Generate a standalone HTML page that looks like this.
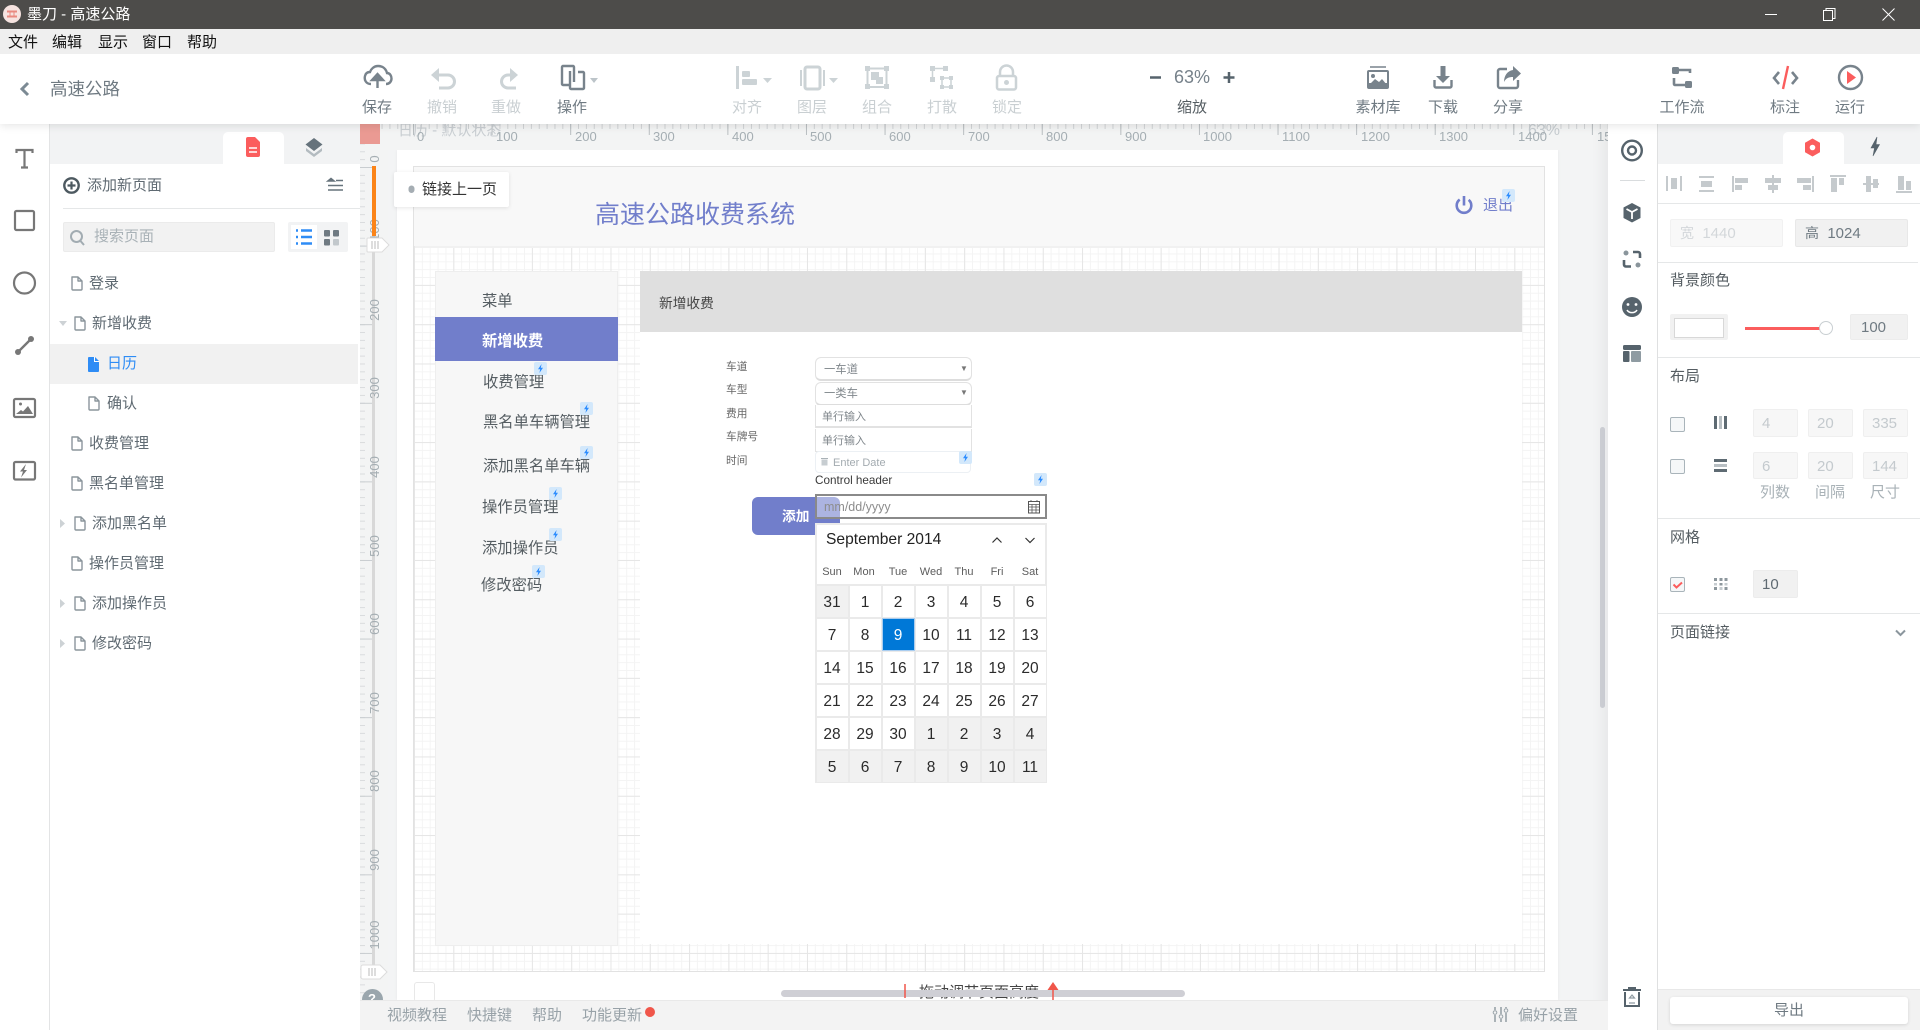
<!DOCTYPE html>
<html lang="zh"><head><meta charset="utf-8"><title>墨刀 - 高速公路</title>
<style>
html,body{margin:0;padding:0;width:1920px;height:1030px;overflow:hidden;background:#f3f4f5}
body{font-family:"Liberation Sans","Noto Sans CJK SC",sans-serif;position:relative;color:#5f6a72}
div,span,i{position:absolute;box-sizing:border-box;display:block}
.t{white-space:nowrap;line-height:20px;transform:translateY(calc(-50% + 1px));font-size:15px}
.c{white-space:nowrap;line-height:20px;transform:translate(-50%,calc(-50% + 1px));font-size:15px;text-align:center}
.tb{color:#6f7a82;top:107px}
.dis{color:#c9cfd2;top:107px}
.hl{background:#e5e7e8;height:1px}
.in{background:#f7f7f7;border:1px solid #efefef;border-radius:2px;color:#c4cace;font-size:15px;line-height:27px;text-align:left;padding-left:8px}
.rl{color:#a5aeb3;font-size:13px;line-height:14px;top:130px;transform:none;white-space:nowrap}
.rv{color:#a5aeb3;font-size:13px;line-height:14px;left:375px;transform:translate(-50%,-50%) rotate(-90deg);white-space:nowrap}
.m{color:#555d62;font-size:15.3px}
.cal{left:815px;top:523px;width:232px;height:260px;background:#eaeaea}
.g{left:1.500px;top:63px;display:grid;grid-template-columns:repeat(7,31px);grid-auto-rows:31px;gap:2px;position:absolute}
.g b{display:block;position:static;background:#fff;color:#2b2b2b;font-weight:400;font-size:15.5px;line-height:33px;height:31px;overflow:hidden;text-align:center}
.g b.o{background:#f1f1f1}
.g b.s{background:#0078d7;color:#fff;outline:1px solid #a9cdf0}
.d{font-size:11px;color:#5c5c5c;top:572px;transform:translate(-50%,-50%);line-height:14px}
.lb{font-size:10.7px;color:#666;left:726px}
.fld{left:815px;width:156px;background:#fff;border:1px solid #e2e2e2}
.ft{font-size:11px;color:#80878c}
.foot{color:#98a2a8;top:1015px}
</style></head><body>

<!-- canvas -->
<div style="left:360px;top:124px;width:1248px;height:876px;background:#f3f4f5"></div>
<div style="left:397px;top:150px;width:1161px;height:850px;background:#fff;box-shadow:0 0 3px rgba(0,0,0,.06)"></div>
<div style="left:413px;top:166px;width:1132px;height:806px;border:1px solid #e2e2e2;background-color:#fff;
background-image:linear-gradient(90deg,#e6e6e6 1px,transparent 1px),linear-gradient(#e6e6e6 1px,transparent 1px),linear-gradient(90deg,#f4f4f4 1px,transparent 1px),linear-gradient(#f4f4f4 1px,transparent 1px);
background-size:39.3px 39.3px,39.3px 39.3px,7.86px 7.86px,7.86px 7.86px"></div>
<div style="left:414px;top:167px;width:1130px;height:79px;background:#f8f8f8"></div>
<div style="left:415px;top:246px;width:1129px;height:2px;background:#f1f1f1"></div>
<div class="t" style="left:595px;top:214px;font-size:25px;line-height:30px;color:#717ecb">高速公路收费系统</div>
<div class="t" style="left:1483px;top:205px;color:#717ecb">退出</div>

<!-- prototype left menu -->
<div style="left:435px;top:271px;width:183px;height:675px;background:#f7f7f7;border:1px solid #eee"></div>
<div style="left:435px;top:317px;width:183px;height:44px;background:#717ecb"></div>
<div class="t m" style="left:482px;top:301px">菜单</div>
<div class="t m" style="left:482px;top:341px;color:#fff;font-weight:700">新增收费</div>
<div class="t m" style="left:483px;top:382px">收费管理</div>
<div class="t m" style="left:483px;top:422px">黑名单车辆管理</div>
<div class="t m" style="left:483px;top:466px">添加黑名单车辆</div>
<div class="t m" style="left:482px;top:507px">操作员管理</div>
<div class="t m" style="left:482px;top:548px">添加操作员</div>
<div class="t m" style="left:481px;top:585px">修改密码</div>

<!-- prototype main -->
<div style="left:640px;top:271px;width:882px;height:673px;background:#fff"></div>
<div style="left:640px;top:271px;width:882px;height:61px;background:#dfdfdf"></div>
<div class="t" style="left:659px;top:303px;font-size:13.7px;color:#444">新增收费</div>
<div class="t lb" style="top:366px">车道</div>
<div class="t lb" style="top:389px">车型</div>
<div class="t lb" style="top:413px">费用</div>
<div class="t lb" style="top:436px">车牌号</div>
<div class="t lb" style="top:460px">时间</div>
<div class="fld" style="top:357px;height:24px;border-radius:6px;border-bottom:2px solid #ddd;width:157px"></div>
<div class="fld" style="top:382px;height:24px;border-radius:6px;border-bottom:2px solid #ddd;width:157px"></div>
<div class="fld" style="top:405px;height:23px;border-width:0 1px 2px 1px;border-color:#e2e2e2;width:157px"></div>
<div class="fld" style="top:429px;height:23px;border-width:0 1px 1px 1px;border-color:#e2e2e2;width:157px"></div>
<div class="fld" style="top:451px;height:22px;border-radius:4px;border-color:#ecf0f4"></div>
<div class="t ft" style="left:824px;top:369px;font-size:11.3px">一车道</div>
<div class="t ft" style="left:824px;top:393px;font-size:11.3px">一类车</div>
<div class="c" style="left:964px;top:368px;font-size:8px;color:#777">▼</div>
<div class="c" style="left:964px;top:392px;font-size:8px;color:#777">▼</div>
<div class="t ft" style="left:822px;top:416px">单行输入</div>
<div class="t ft" style="left:822px;top:440px">单行输入</div>
<div class="t ft" style="left:833px;top:462px;color:#a3abb0">Enter Date</div>
<div class="t" style="left:815px;top:480px;font-size:11.7px;color:#3a3a3a">Control header</div>
<!-- add button -->
<div style="left:752px;top:497px;width:88px;height:38px;background:#717ecb;border-radius:6px"></div>
<div class="t" style="left:782px;top:516px;font-size:13.7px;font-weight:700;color:#fff">添加</div>
<!-- date input -->
<div style="left:815px;top:494px;width:232px;height:25px;border:2px solid #8a8a8a;background:rgba(255,255,255,.42)"></div>
<div style="left:817px;top:496px;width:228px;height:21px;background:linear-gradient(90deg,transparent 23px,#fff 23px);"></div>
<div class="t" style="left:824px;top:506px;font-size:12.5px;color:#8d8d8d">mm/dd/yyyy</div>
<!-- calendar -->
<div class="cal">
<div style="left:2px;top:2px;width:228px;height:59px;background:#fff"></div>
<div class="g">
<b class="o">31</b><b>1</b><b>2</b><b>3</b><b>4</b><b>5</b><b>6</b>
<b>7</b><b>8</b><b class="s">9</b><b>10</b><b>11</b><b>12</b><b>13</b>
<b>14</b><b>15</b><b>16</b><b>17</b><b>18</b><b>19</b><b>20</b>
<b>21</b><b>22</b><b>23</b><b>24</b><b>25</b><b>26</b><b>27</b>
<b>28</b><b>29</b><b>30</b><b class="o">1</b><b class="o">2</b><b class="o">3</b><b class="o">4</b>
<b class="o">5</b><b class="o">6</b><b class="o">7</b><b class="o">8</b><b class="o">9</b><b class="o">10</b><b class="o">11</b>
</div></div>
<div class="t" style="left:826px;top:539px;font-size:15.6px;color:#222">September 2014</div>
<span class="d" style="left:832px">Sun</span><span class="d" style="left:864px">Mon</span><span class="d" style="left:898px">Tue</span><span class="d" style="left:931px">Wed</span><span class="d" style="left:964px">Thu</span><span class="d" style="left:997px">Fri</span><span class="d" style="left:1030px">Sat</span>

<!-- tooltip -->
<div style="left:394px;top:172px;width:115px;height:35px;background:#fff;border-radius:2px;box-shadow:0 1px 4px rgba(0,0,0,.1)"></div>
<div class="t" style="left:422px;top:189px;color:#333">链接上一页</div>

<!-- drag hint -->
<div class="t" style="left:919px;top:992px;color:#444">拖动调节页面高度</div>
<div style="left:414px;top:982px;width:21px;height:20px;background:#fff;border:1px solid #e8e8e8;border-radius:3px"></div>
<div style="left:781px;top:990px;width:404px;height:7px;background:#cfcfd5;border-radius:4px"></div>
<div style="left:1600px;top:427px;width:5px;height:281px;background:#d0d2d8;border-radius:3px"></div>

<!-- horizontal ruler -->
<div style="left:360px;top:124px;width:1248px;height:26px;background-color:#f3f4f4;
background-image:linear-gradient(90deg,#b9bec1 1px,transparent 1px),linear-gradient(90deg,#d0d3d5 1px,transparent 1px);
background-size:78.6px 11px,7.86px 5px;background-position:53px 0,53px 0;background-repeat:repeat-x"></div>
<div class="t" style="left:398px;top:130px;color:#c9ced2">日历 - 默认状态</div>
<div class="t" style="left:1528px;top:130px;font-size:16px;color:#c6ccd0">63%</div>
<span class="rl" style="left:417px">0</span><span class="rl" style="left:496px">100</span><span class="rl" style="left:575px">200</span><span class="rl" style="left:653px">300</span><span class="rl" style="left:732px">400</span><span class="rl" style="left:810px">500</span><span class="rl" style="left:889px">600</span><span class="rl" style="left:968px">700</span><span class="rl" style="left:1046px">800</span><span class="rl" style="left:1125px">900</span><span class="rl" style="left:1203px">1000</span><span class="rl" style="left:1282px">1100</span><span class="rl" style="left:1361px">1200</span><span class="rl" style="left:1439px">1300</span><span class="rl" style="left:1518px">1400</span><span class="rl" style="left:1597px">1500</span>

<!-- vertical ruler -->
<div style="left:360px;top:144px;width:28px;height:856px;background-color:#f3f4f4;
background-image:linear-gradient(#c9cdd0 1px,transparent 1px),linear-gradient(#d9dbdd 1px,transparent 1px);
background-size:12px 78.6px,5px 7.86px;background-position:0 23px,0 23px;background-repeat:repeat-y"></div>
<div style="left:372px;top:166px;width:3px;height:806px;background:#d8d8d8"></div>
<span class="rv" style="top:159px">0</span><span class="rv" style="top:230px">100</span><span class="rv" style="top:310px">200</span><span class="rv" style="top:388px">300</span><span class="rv" style="top:467px">400</span><span class="rv" style="top:546px">500</span><span class="rv" style="top:624px">600</span><span class="rv" style="top:703px">700</span><span class="rv" style="top:781px">800</span><span class="rv" style="top:860px">900</span><span class="rv" style="top:935px">1000</span>
<div style="left:372px;top:166px;width:4px;height:70px;background:#fb8418"></div>
<div style="left:360px;top:124px;width:20px;height:20px;background:#ea9a93"></div>

<!-- help circle, clipped by bottom bar -->
<div style="left:362px;top:989px;width:21px;height:21px;border-radius:50%;background:#9aa6ad"></div>
<div class="c" style="left:372px;top:998px;color:#fff;font-size:13px;font-weight:700">?</div>

<!-- left strip and panel -->
<div style="left:0;top:124px;width:50px;height:906px;background:#fff;border-right:1px solid #e3e4e5"></div>
<div style="left:50px;top:124px;width:310px;height:906px;background:#fff"></div>
<div style="left:50px;top:124px;width:310px;height:40px;background:#f2f3f4"></div>
<div style="left:223px;top:132px;width:61px;height:32px;background:#fff;border-radius:5px 5px 0 0"></div>
<div class="t" style="left:87px;top:185px">添加新页面</div>
<div class="hl" style="left:63px;top:208px;width:297px"></div>
<div style="left:63px;top:222px;width:212px;height:30px;background:#f2f2f2;border:1px solid #ebebeb;border-radius:2px"></div>
<div class="t" style="left:94px;top:236px;color:#a9b2b7">搜索页面</div>
<div style="left:288px;top:222px;width:60px;height:30px;background:#f2f3f4;border-radius:2px"></div>
<div style="left:291px;top:225px;width:26px;height:24px;background:#fff"></div>
<div style="left:50px;top:344px;width:308px;height:40px;background:#f1f1f1"></div>
<div class="t" style="left:89px;top:283px">登录</div>
<div class="t" style="left:92px;top:323px">新增收费</div>
<div class="t" style="left:107px;top:363px;color:#2e8cf5">日历</div>
<div class="t" style="left:107px;top:403px">确认</div>
<div class="t" style="left:89px;top:443px">收费管理</div>
<div class="t" style="left:89px;top:483px">黑名单管理</div>
<div class="t" style="left:92px;top:523px">添加黑名单</div>
<div class="t" style="left:89px;top:563px">操作员管理</div>
<div class="t" style="left:92px;top:603px">添加操作员</div>
<div class="t" style="left:92px;top:643px">修改密码</div>

<!-- right strip and panel -->
<div style="left:1608px;top:124px;width:50px;height:906px;background:#fff;border-right:1px solid #dfe0e1;box-shadow:-6px 0 12px rgba(0,0,0,.05)"></div>
<div style="left:1658px;top:124px;width:262px;height:906px;background:#fff"></div>
<div style="left:1658px;top:124px;width:262px;height:40px;background:#f2f3f4"></div>
<div style="left:1783px;top:132px;width:61px;height:32px;background:#fff;border-radius:5px 5px 0 0"></div>
<div class="hl" style="left:1658px;top:203px;width:262px"></div>
<div class="in" style="left:1670px;top:219px;width:113px;height:28px;background:#f8f8f8;border-color:#f1f1f1;padding-left:9px;color:#d3d7da"><span style="position:static;display:inline;font-size:14px">宽</span>&nbsp; 1440</div>
<div class="in" style="left:1795px;top:219px;width:113px;height:28px;background:#f1f1f1;border-color:#e8e8e8;padding-left:9px;color:#6f7a82"><span style="position:static;display:inline;font-size:14px">高</span>&nbsp; 1024</div>
<div class="hl" style="left:1658px;top:262px;width:260px"></div>
<div class="t" style="left:1670px;top:280px;color:#555d62">背景颜色</div>
<div style="left:1670px;top:314px;width:58px;height:26px;background:#f1f1f1;border-radius:2px"></div>
<div style="left:1674px;top:318px;width:50px;height:20px;background:#fff;border:1px solid #d8d8d8"></div>
<div style="left:1745px;top:327px;width:75px;height:3px;background:#fb5d5d"></div>
<div style="left:1819px;top:321px;width:14px;height:14px;background:#fff;border:1px solid #c9cfd2;border-radius:50%"></div>
<div class="in" style="left:1850px;top:314px;width:58px;height:26px;background:#f1f1f1;border-color:#ececec;color:#6f7a82;line-height:25px;padding-left:10px">100</div>
<div class="hl" style="left:1658px;top:357px;width:262px"></div>
<div class="t" style="left:1670px;top:376px;color:#555d62">布局</div>
<div style="left:1670px;top:417px;width:15px;height:15px;background:#f5f7f8;border:1px solid #a9b4ba;border-radius:2px"></div>
<div style="left:1670px;top:459px;width:15px;height:15px;background:#f5f7f8;border:1px solid #a9b4ba;border-radius:2px"></div>
<div class="in" style="left:1753px;top:409px;width:45px;height:28px">4</div>
<div class="in" style="left:1808px;top:409px;width:45px;height:28px">20</div>
<div class="in" style="left:1863px;top:409px;width:45px;height:28px">335</div>
<div class="in" style="left:1753px;top:452px;width:45px;height:27px">6</div>
<div class="in" style="left:1808px;top:452px;width:45px;height:27px">20</div>
<div class="in" style="left:1863px;top:452px;width:45px;height:27px">144</div>
<div class="t" style="left:1760px;top:492px;color:#a9b2b7">列数</div>
<div class="t" style="left:1815px;top:492px;color:#a9b2b7">间隔</div>
<div class="t" style="left:1870px;top:492px;color:#a9b2b7">尺寸</div>
<div class="hl" style="left:1658px;top:518px;width:262px"></div>
<div class="t" style="left:1670px;top:537px;color:#555d62">网格</div>
<div style="left:1670px;top:577px;width:15px;height:15px;background:#f5f7f8;border:1px solid #a9b4ba;border-radius:2px"></div>
<div class="in" style="left:1753px;top:570px;width:45px;height:28px;background:#f1f1f1;border-color:#ececec;color:#5f6a72">10</div>
<div class="hl" style="left:1658px;top:613px;width:262px"></div>
<div class="t" style="left:1670px;top:632px;color:#555d62">页面链接</div>
<div style="left:1658px;top:989px;width:262px;height:41px;background:#f2f2f2;border-top:1px solid #e8e8e8"></div>
<div style="left:1670px;top:997px;width:238px;height:27px;background:#fff;border-radius:3px;box-shadow:0 1px 3px rgba(0,0,0,.12)"></div>
<div class="c" style="left:1789px;top:1010px;color:#6f7a82">导出</div>

<!-- bottom bar -->
<div style="left:360px;top:1000px;width:1248px;height:30px;background:#f3f3f3;border-top:1px solid #e9e9e9"></div>
<div class="t foot" style="left:387px">视频教程</div>
<div class="t foot" style="left:467px">快捷键</div>
<div class="t foot" style="left:532px">帮助</div>
<div class="t foot" style="left:582px">功能更新</div>
<div style="left:645px;top:1007px;width:10px;height:10px;border-radius:50%;background:#f0564a"></div>
<div class="t foot" style="left:1518px">偏好设置</div>

<!-- top chrome -->
<div style="left:0;top:54px;width:1920px;height:70px;background:#fff;box-shadow:0 2px 8px rgba(0,0,0,.1)"></div>
<div style="left:0;top:0;width:1920px;height:29px;background:#4d4c4a"></div>
<div style="left:0;top:29px;width:1920px;height:25px;background:#efefef"></div>
<div class="t" style="left:27px;top:14px;color:#fff">墨刀 - 高速公路</div>
<div class="t" style="left:8px;top:42px;color:#111">文件</div>
<div class="t" style="left:52px;top:42px;color:#111">编辑</div>
<div class="t" style="left:98px;top:42px;color:#111">显示</div>
<div class="t" style="left:142px;top:42px;color:#111">窗口</div>
<div class="t" style="left:187px;top:42px;color:#111">帮助</div>
<div class="t" style="left:50px;top:88px;font-size:17.5px;line-height:24px;color:#6f7a82">高速公路</div>
<div class="c tb" style="left:377px">保存</div>
<div class="c dis" style="left:442px">撤销</div>
<div class="c dis" style="left:506px">重做</div>
<div class="c tb" style="left:572px">操作</div>
<div class="c dis" style="left:747px">对齐</div>
<div class="c dis" style="left:812px">图层</div>
<div class="c dis" style="left:877px">组合</div>
<div class="c dis" style="left:942px">打散</div>
<div class="c dis" style="left:1007px">锁定</div>
<div class="c" style="left:1192px;top:107px;color:#555d62">缩放</div>
<div class="c" style="left:1192px;top:76px;font-size:18px;color:#76818a">63%</div>
<div class="c tb" style="left:1378px">素材库</div>
<div class="c tb" style="left:1443px">下载</div>
<div class="c tb" style="left:1508px">分享</div>
<div class="c tb" style="left:1682px">工作流</div>
<div class="c tb" style="left:1785px">标注</div>
<div class="c tb" style="left:1850px">运行</div>

<!-- icon overlay -->
<svg width="1920" height="1030" viewBox="0 0 1920 1030" style="position:absolute;left:0;top:0" fill="none">
<defs>
<g id="pg"><path d="M1 1H7L11 5V13a1 1 0 0 1-1 1H2a1 1 0 0 1-1-1Z M7 1V5H11" stroke="#8b959c" stroke-width="1.4" stroke-linejoin="round"/></g>
<g id="bd"><rect width="13" height="13" rx="2" fill="#d3e8fb"/><path d="M7.6 2 4 7.2H6.2L5.4 11 9 5.8H6.8Z" fill="#2b8cff"/></g>
</defs>
<!-- title -->
<circle cx="12" cy="14" r="9" fill="#f6e3e0"/><path d="M7 11.500h10M7 16.500h10" stroke="#e98a80" stroke-width="2"/><path d="M10 11v6M14 11v6" stroke="#e98a80"/>
<path d="M1765 14.500h12" stroke="#fff"/>
<rect x="1823.500" y="10.500" width="9" height="10" stroke="#fff"/><path d="M1826 10.500V8.500h9v10h-2.500" stroke="#fff"/>
<path d="M1882.500 8.500l12 12M1894.500 8.500l-12 12" stroke="#fff"/>
<!-- back -->
<path d="M28 83 22 89l6 6" stroke="#7c8a94" stroke-width="3"/>
<!-- save -->
<path d="M371 84c-5 0-7-4-6-8 .7-3 3-4 5-4 1-3 4-6 8-6 5 0 8 3 9 7 3 0 4.500 3 4.500 5.500 0 3-2 5.500-5.500 5.500" stroke="#78838c" stroke-width="2.400"/>
<path d="M377.500 88V75M372 80l5.500-6 5.500 6z" stroke="#78838c" stroke-width="2.400" fill="#78838c"/>
<!-- undo -->
<path d="M434 75h14a6.500 6.500 0 0 1 0 13h-9" stroke="#ccd3d6" stroke-width="3"/><path d="M439 68 431 75l8 7z" fill="#ccd3d6"/>
<!-- redo -->
<path d="M513 75h-5a6.500 6.500 0 0 0 0 13h8" stroke="#ccd3d6" stroke-width="3"/><path d="M510 68l8 7-8 7z" fill="#ccd3d6"/>
<!-- operate -->
<path d="M571 85h-8a1 1 0 0 1-1-1V67a1 1 0 0 1 1-1h10a1 1 0 0 1 1 1v15" stroke="#78838c" stroke-width="2.400"/>
<path d="M570 71v17a1 1 0 0 0 1 1h12a1 1 0 0 0 1-1V73a1 1 0 0 0-1-1h-5" stroke="#78838c" stroke-width="2.400"/>
<path d="M590 78h8l-4 5z" fill="#bcc4c9"/>
<!-- align -->
<path d="M737.500 66v23" stroke="#ccd3d6" stroke-width="3"/><rect x="742" y="71" width="8" height="6" rx="1" fill="#ccd3d6"/><rect x="742" y="79" width="15" height="6" rx="1" fill="#ccd3d6"/><path d="M763 78h9l-4.500 5z" fill="#ccd3d6"/>
<!-- layer -->
<rect x="805" y="67" width="15" height="22" rx="2" stroke="#ccd3d6" stroke-width="3"/><path d="M802 71h-1v14h1M823 71h1v14h-1" stroke="#ccd3d6" stroke-width="2"/><path d="M829 78h9l-4.500 5z" fill="#ccd3d6"/>
<!-- group -->
<rect x="867.500" y="68.500" width="19" height="18.500" stroke="#ccd3d6" stroke-width="2"/><path d="M865 66h5v5h-5zM884 66h5v5h-5zM865 84h5v5h-5zM884 84h5v5h-5z" fill="#ccd3d6"/><path d="M871 72h8v5h4v7h-7v-4h-5z" fill="#ccd3d6"/>
<!-- ungroup -->
<path d="M930 66h5v5h-5zM943 66h5v5h-5zM930 77h5v5h-5zM940 76h4v4h-4zM949 76h4v4h-4zM940 85h4v4h-4zM949 85h4v4h-4z" fill="#ccd3d6"/><path d="M935 68.500h8M932.500 71v6M942 80v5M951 80v5M944 87h5M944 78h5" stroke="#ccd3d6" stroke-width="1.500"/>
<!-- lock -->
<rect x="997" y="76" width="19" height="13.500" rx="2" stroke="#ccd3d6" stroke-width="2.500"/><path d="M1000 76v-4a6.500 6.500 0 0 1 13 0v4" stroke="#ccd3d6" stroke-width="2.500"/><circle cx="1006.500" cy="82.500" r="2.500" fill="#ccd3d6"/>
<!-- zoom -->
<path d="M1150 77.500h11" stroke="#56636c" stroke-width="2.500"/><path d="M1223.500 77.500h11M1229 72v11" stroke="#56636c" stroke-width="2.500"/>
<!-- assets -->
<path d="M1370 67h16" stroke="#78838c" stroke-width="1.500"/><rect x="1367" y="70" width="22" height="19" rx="2" fill="#78838c"/><rect x="1369" y="72" width="18" height="11" fill="#fff"/><circle cx="1373" cy="76" r="2" fill="#78838c"/><path d="M1369 85l6-6 4 3 3-3 5 6v2h-18z" fill="#78838c"/>
<!-- download -->
<path d="M1443 66v12" stroke="#78838c" stroke-width="5"/><path d="M1436 76h14l-7 7z" fill="#78838c"/><path d="M1434.500 80v6a1.500 1.500 0 0 0 1.500 1.500h14a1.500 1.500 0 0 0 1.500-1.500v-6" stroke="#78838c" stroke-width="2.400"/>
<!-- share -->
<path d="M1507 69h-7a2 2 0 0 0-2 2v15a2 2 0 0 0 2 2h16a2 2 0 0 0 2-2v-6" stroke="#78838c" stroke-width="2.400"/><path d="M1513 66l8 7.500-8 7.500v-4c-4 0-7 1-9 5 0-6 3-11 9-12z" fill="#78838c"/>
<!-- workflow -->
<rect x="1672" y="67" width="7" height="7" rx="1.500" fill="#78838c"/><rect x="1685" y="81" width="7" height="7" rx="1.500" fill="#78838c"/><path d="M1679 70h11v3M1674 78v6a1 1 0 0 0 1 1h10" stroke="#78838c" stroke-width="2.600"/>
<!-- code -->
<path d="M1779 72l-5 6 5 6M1792 72l5 6-5 6" stroke="#78838c" stroke-width="2.600"/><path d="M1788 66l-5 23" stroke="#fb5d5d" stroke-width="2.400"/>
<!-- run -->
<circle cx="1850.500" cy="77.500" r="11.500" stroke="#78838c" stroke-width="2.400"/><path d="M1847 71v13l9-6.500z" fill="#fb5d5d"/>

<!-- left tools -->
<path d="M16.500 153v-3h16v3M24.500 150v17M21 167.500h7" stroke="#777" stroke-width="2.200"/>
<rect x="15" y="211" width="19" height="19" rx="1.500" stroke="#777" stroke-width="2.200"/>
<circle cx="24.500" cy="283" r="10.500" stroke="#777" stroke-width="2.200"/>
<path d="M18 352l13-13" stroke="#777" stroke-width="2.400"/><circle cx="18" cy="352" r="3" fill="#777"/><circle cx="31" cy="339" r="3" fill="#777"/>
<rect x="14" y="399" width="21" height="18" rx="1.500" stroke="#777" stroke-width="2.200"/><circle cx="20.500" cy="404" r="1.500" fill="#777"/><path d="M16 414l5-4 2 1.500 5-5.500 5 8z" fill="#777"/>
<rect x="14" y="462" width="21" height="17.500" rx="1.500" stroke="#777" stroke-width="2.200"/><path d="M26 464l-6 7.500h3l-2 6 6-7.500h-3z" fill="#777"/>
<!-- panel tabs -->
<path d="M248 137h7l5 5v13a2 2 0 0 1-2 2h-10a2 2 0 0 1-2-2v-16a2 2 0 0 1 2-2z" fill="#fb5d5d"/><path d="M249 148h8M249 152h8" stroke="#fff" stroke-width="1.500"/>
<path d="M314 138l8.500 6.500-8.500 6.500-8.500-6.500z" fill="#66737c"/><path d="M306 148l8 6 8-6v3l-8 6-8-6z" fill="#b3bbc0"/>
<!-- add page -->
<circle cx="71.500" cy="185.500" r="7.200" stroke="#4d5960" stroke-width="2.400"/><path d="M71.500 181.500v8M67.500 185.500h8" stroke="#4d5960" stroke-width="2.200"/>
<path d="M328 181l3-2.500 3 2.500zM336 180.500h7M328 185.500h15M328 190h15" stroke="#66737c" stroke-width="1.600" fill="#66737c"/>
<!-- search -->
<circle cx="76.500" cy="236.500" r="5.500" stroke="#a2acb2" stroke-width="2"/><path d="M80.500 241l3.500 4" stroke="#a2acb2" stroke-width="2"/>
<path d="M296 230.500h2M301 230.500h11M296 237h2M301 237h11M296 243.500h2M301 243.500h11" stroke="#2e8cf5" stroke-width="2.400"/>
<rect x="324" y="230" width="6" height="6.500" rx="1" fill="#6f7a82"/><rect x="333" y="230" width="6" height="6.500" rx="1" fill="#6f7a82"/><rect x="324" y="239" width="6" height="6.500" rx="1" fill="#6f7a82"/><rect x="333" y="239" width="6" height="6.500" rx="1" fill="#c2c8cc"/>
<!-- tree -->
<use href="#pg" x="71" y="276"/><use href="#pg" x="74" y="316"/><use href="#pg" x="88" y="396"/><use href="#pg" x="71" y="436"/><use href="#pg" x="71" y="476"/><use href="#pg" x="74" y="516"/><use href="#pg" x="71" y="556"/><use href="#pg" x="74" y="596"/><use href="#pg" x="74" y="636"/>
<path d="M89 357h6l4 4v10a1 1 0 0 1-1 1H89a1 1 0 0 1-1-1V358a1 1 0 0 1 1-1z" fill="#2e8cf5"/><path d="M94.500 357v4.500h4.500" stroke="#fff"/>
<path d="M59 321h8l-4 5z" fill="#cdd2d5"/><path d="M60 519v9l5-4.500zM60 599v9l5-4.500zM60 639v9l5-4.500z" fill="#cdd2d5"/>
<!-- tooltip dot -->
<rect x="409" y="186" width="5" height="6.500" rx="2.500" fill="#a5adb3" stroke="#a5adb3"/>
<!-- handles -->
<path d="M368 238h14l7 7-7 7h-14a1 1 0 0 1-1-1v-12a1 1 0 0 1 1-1z" fill="#fff" stroke="#dcdcdc"/><path d="M372 241v8M375 241v8M378 241v8" stroke="#bbb"/>
<path d="M363 965h17l7 7-7 7h-17a2 2 0 0 1-2-2v-10a2 2 0 0 1 2-2z" fill="#fff" stroke="#dcdcdc"/><path d="M369 968v8M372 968v8M375 968v8" stroke="#bbb"/>
<!-- drag arrows -->
<path d="M905 984v14" stroke="#f0564a" stroke-width="1.500"/><path d="M1053 988v12" stroke="#f0564a" stroke-width="1.500"/><path d="M1047.500 990l5.500-8 5.500 8z" fill="#f0564a"/>
<!-- logout -->
<circle cx="1464" cy="205.500" r="7.300" stroke="#717ecb" stroke-width="2.600" stroke-dasharray="36 10" stroke-dashoffset="-5" transform="rotate(-90 1464 205.500)"/><path d="M1464 196v9.500" stroke="#717ecb" stroke-width="2.600"/>
<!-- badges -->
<use href="#bd" x="1502" y="189"/><use href="#bd" x="534" y="362"/><use href="#bd" x="580" y="402"/><use href="#bd" x="580" y="446"/><use href="#bd" x="549" y="487"/><use href="#bd" x="549" y="528"/><use href="#bd" x="532" y="565"/><use href="#bd" x="959" y="451"/><use href="#bd" x="1034" y="473"/>
<!-- small form icons -->
<rect x="821.500" y="459.500" width="6" height="6" fill="#c7cdd1"/><path d="M821 458.500h7" stroke="#aab2b7"/>
<rect x="1028.500" y="501.500" width="11" height="11.500" stroke="#555"/><path d="M1028.500 504.500h11M1028.500 507h11M1028.500 510h11M1032 504.500v8.500M1036 504.500v8.500M1031 500v2M1037 500v2" stroke="#555" stroke-width=".8"/>
<path d="M992.500 542.500l4.500-4.500 4.500 4.500M1025.500 538l4.500 4.500 4.500-4.500" stroke="#333" stroke-width="1.200"/>
<!-- right strip -->
<circle cx="1632" cy="150.500" r="9.800" stroke="#56636c" stroke-width="2.400"/><circle cx="1632" cy="150.500" r="4" stroke="#56636c" stroke-width="2.400"/>
<path d="M1620 180.500h25" stroke="#d9dcde"/>
<path d="M1632 203l8.500 4.500v10.500l-8.500 4.500-8.500-4.500v-10.500z" fill="#56636c"/><path d="M1626.500 209l5.500 3 5.500-3M1632 212v7" stroke="#fff" stroke-width="1.800"/>
<path d="M1633 252h5a2 2 0 0 1 2 2v4M1631 266.500h-5a2 2 0 0 1-2-2v-4.500" stroke="#56636c" stroke-width="2.600"/><circle cx="1626" cy="253" r="2.500" fill="#8a959c"/><circle cx="1638" cy="265" r="2.500" fill="#8a959c"/>
<circle cx="1632" cy="307" r="10" fill="#56636c"/><circle cx="1628" cy="304.500" r="1.400" fill="#fff"/><circle cx="1636" cy="304.500" r="1.400" fill="#fff"/><path d="M1627 310c2 3.500 8 3.500 10 0" stroke="#fff" stroke-width="1.500"/>
<rect x="1623" y="345" width="18" height="5" rx="1.500" fill="#56636c"/><rect x="1623" y="351" width="6.500" height="11" rx="1" fill="#56636c"/><rect x="1631" y="351" width="10" height="11" rx="1" fill="#8f9ba2"/>
<path d="M1623 990h18M1629 990v-2h6v2" stroke="#56636c" stroke-width="2"/><path d="M1625 992v14h14v-14" stroke="#56636c" stroke-width="2"/><path d="M1632 995l2.500 3h-5zM1629 1003h6" stroke="#8f9ba2" stroke-width="1.200"/>
<!-- tab icons right -->
<path d="M1812.500 139l7 4v9l-7 4-7-4v-9z" fill="#fb5d5d" stroke="#fb5d5d" stroke-linejoin="round"/><circle cx="1812.500" cy="147.500" r="2.800" fill="#fff"/>
<path d="M1877 137l-6 11h3.500l-1.500 8 6.500-11.500h-3.500z" fill="#56636c" stroke="#56636c" stroke-width=".6"/>
<!-- align row -->
<g fill="#c5cacd"><rect x="1666" y="176" width="2" height="15"/><rect x="1671" y="178" width="6" height="11"/><rect x="1680" y="176" width="2" height="15"/>
<rect x="1699" y="176" width="15" height="2"/><rect x="1701" y="181" width="11" height="6"/><rect x="1699" y="190" width="15" height="2"/>
<rect x="1732" y="176" width="2" height="16"/><rect x="1735" y="178" width="13" height="5"/><rect x="1735" y="185" width="7" height="5"/>
<rect x="1772" y="175" width="2" height="18"/><rect x="1765" y="178" width="16" height="5"/><rect x="1768" y="185" width="10" height="5"/>
<rect x="1812" y="176" width="2" height="16"/><rect x="1797" y="178" width="14" height="5"/><rect x="1803" y="185" width="8" height="5"/>
<rect x="1830" y="175" width="16" height="2"/><rect x="1831" y="178" width="6" height="14"/><rect x="1839" y="178" width="5" height="7"/>
<rect x="1863" y="183" width="16" height="2"/><rect x="1866" y="176" width="5" height="16"/><rect x="1873" y="179" width="5" height="9"/>
<rect x="1896" y="191" width="16" height="2"/><rect x="1898" y="176" width="6" height="14"/><rect x="1906" y="181" width="5" height="9"/></g>
<!-- layout icons -->
<path d="M1714 416h3v13h-3z" fill="#5e6b73"/><path d="M1719 416h3v13h-3z" fill="#b8bfc3"/><path d="M1724 416h3v13h-3z" fill="#5e6b73"/>
<path d="M1714 459h13v3h-13z" fill="#5e6b73"/><path d="M1714 464h13v3h-13z" fill="#b8bfc3"/><path d="M1714 469h13v3h-13z" fill="#5e6b73"/>
<path d="M1714 578h3v3h-3zM1719.500 578h3v3h-3zM1724.500 578h3v3h-3zM1719.500 583h3v2.500h-3zM1714 587h3v3h-3zM1724.500 587h3v3h-3z" fill="#8d979d"/><path d="M1714 583h3v2.500h-3zM1724.500 583h3v2.500h-3zM1719.500 587h3v3h-3z" fill="#c6ccd0"/>
<path d="M1673.500 584.500l3 3 5.500-5" stroke="#fb5d5d" stroke-width="2"/>
<path d="M1896 630.500l4.500 4.500 4.500-4.500" stroke="#8b969d" stroke-width="2"/>
<!-- prefs -->
<path d="M1495 1007v3M1495 1015v7M1501 1007v7M1501 1019v3M1506 1007v1M1506 1013v9" stroke="#98a2a8" stroke-width="1.600"/><circle cx="1495" cy="1012.500" r="1.800" stroke="#98a2a8"/><circle cx="1501" cy="1016.500" r="1.800" stroke="#98a2a8"/><circle cx="1506" cy="1010.500" r="1.800" stroke="#98a2a8"/>
</svg>
</body></html>
